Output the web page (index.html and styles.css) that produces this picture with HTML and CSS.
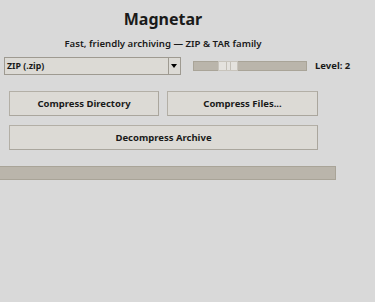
FILE: index.html
```html
<!DOCTYPE html>
<html lang="en">
<head>
    <meta charset="UTF-8">
    <meta name="viewport" content="width=device-width, initial-scale=1.0">
    <title>Magnetar</title>
    <link rel="stylesheet" href="styles.css">
</head>
<body>
    <div class="app">
        <h1 class="title">Magnetar</h1>
        <p class="subtitle">Fast, friendly archiving — ZIP &amp; TAR family</p>

        <div class="options">
            <div class="combo">
                <span class="combo-text">ZIP (.zip)</span>
                <span class="combo-arrow"></span>
            </div>
            <div class="scale">
                <div class="scale-thumb"><span></span><span></span></div>
            </div>
            <span class="level">Level: 2</span>
        </div>

        <div class="buttons">
            <button class="btn">Compress Directory</button>
            <button class="btn">Compress Files...</button>
            <button class="btn wide">Decompress Archive</button>
        </div>

        <div class="progress">
            <div class="progress-fill"></div>
        </div>
    </div>
</body>
</html>
```

FILE: styles.css
```css
body {
    margin: 0;
    padding: 0;
    background-color: #d9d9d9;
    font-family: "Noto Sans", "DejaVu Sans", sans-serif;
    color: #1a1a1a;
}

.app {
    width: 375px;
    height: 302px;
    display: flex;
    flex-direction: column;
}

.title {
    margin: 7px 0 0 0;
    width: 326px;
    text-align: center;
    font-size: 16px;
    font-weight: bold;
    line-height: 25px;
}

.subtitle {
    margin: 4px 0 0 0;
    width: 326px;
    text-align: center;
    font-size: 9.6px;
    font-weight: 600;
    line-height: 16px;
}

.options {
    display: flex;
    align-items: center;
    margin-top: 5px;
    padding-left: 4px;
    height: 18px;
}

.combo {
    display: flex;
    width: 177px;
    height: 18px;
    box-sizing: border-box;
    border: 1px solid #9e9a91;
    background: #dcdad5;
}

.combo-text {
    flex: 1;
    font-size: 8.8px;
    font-weight: bold;
    line-height: 16px;
    padding-left: 2px;
}

.combo-arrow {
    width: 11px;
    border-left: 1px solid #9e9a91;
    position: relative;
}

.combo-arrow::after {
    content: "";
    position: absolute;
    left: 2px;
    top: 6px;
    border-left: 3.5px solid transparent;
    border-right: 3.5px solid transparent;
    border-top: 4px solid #000;
}

.scale {
    margin-left: 12px;
    width: 114px;
    height: 10px;
    box-sizing: border-box;
    border: 1px solid #a9a498;
    background: #bab5ab;
    position: relative;
}

.scale-thumb {
    position: absolute;
    left: 24px;
    top: -1px;
    width: 20px;
    height: 10px;
    box-sizing: border-box;
    border: 1px solid #c8c4bc;
    background: #e4e2de;
    display: flex;
    justify-content: center;
    gap: 3px;
}

.scale-thumb span {
    width: 1px;
    background: #c3bfb7;
}

.level {
    margin-left: 8px;
    font-size: 9.5px;
    font-weight: bold;
    line-height: 18px;
}

.buttons {
    display: grid;
    grid-template-columns: 150px 151px;
    column-gap: 8px;
    row-gap: 9px;
    margin-top: 16px;
    padding-left: 9px;
}

.btn {
    height: 25px;
    box-sizing: border-box;
    border: 1px solid #b3afa6;
    border-right-color: #aaa69d;
    border-bottom-color: #aaa69d;
    background: #dcdad5;
    font-family: "Noto Sans", "DejaVu Sans", sans-serif;
    font-size: 9.5px;
    font-weight: bold;
    color: #1a1a1a;
    padding: 0;
}

.btn.wide {
    grid-column: 1 / 3;
}

.progress {
    margin-top: 16px;
    width: 336px;
    height: 14px;
}

.progress-fill {
    width: 100%;
    height: 100%;
    box-sizing: border-box;
    border: 1px solid #a9a498;
    border-left: none;
    background: #bab5ab;
}
```
